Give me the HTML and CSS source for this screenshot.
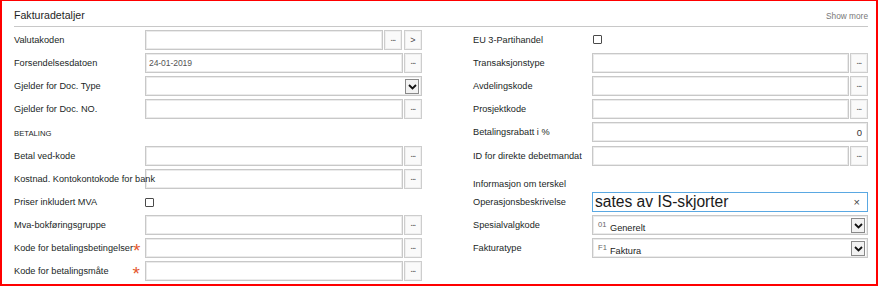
FILE: index.html
```html
<!DOCTYPE html>
<html lang="nb">
<head>
    <meta charset="UTF-8">
    <title>Fakturadetaljer</title>
    <link rel="stylesheet" href="styles.css">
</head>
<body>
    <div class="panel">
        <div class="panel-head">
            <span class="panel-title">Fakturadetaljer</span>
            <a class="show-more" href="javascript:;">Show more</a>
        </div>

        <div class="panel-body">
            <!-- venstre kolonne -->
            <div class="col col-left">
                <div class="row">
                    <label class="lbl">Valutakoden</label>
                    <div class="fld">
                        <input class="inp" type="text">
                        <span class="btn btn-dots">...</span>
                        <span class="btn btn-go">&gt;</span>
                    </div>
                </div>
                <div class="row">
                    <label class="lbl">Forsendelsesdatoen</label>
                    <div class="fld">
                        <input class="inp inp-date" type="text" value="24-01-2019">
                        <span class="btn btn-dots">...</span>
                    </div>
                </div>
                <div class="row">
                    <label class="lbl">Gjelder for Doc. Type</label>
                    <div class="fld">
                        <div class="sel">
                            <span class="sel-text"></span>
                            <span class="sel-arrow"><svg width="9" height="6" viewBox="0 0 9 6"><path d="M1 1 L4.5 4.5 L8 1" fill="none" stroke="#111" stroke-width="1.8"/></svg></span>
                        </div>
                    </div>
                </div>
                <div class="row">
                    <label class="lbl">Gjelder for Doc. NO.</label>
                    <div class="fld">
                        <input class="inp" type="text">
                        <span class="btn btn-dots">...</span>
                    </div>
                </div>
                <div class="row row-tall">
                    <span class="lbl lbl-section">BETALING</span>
                </div>
                <div class="row">
                    <label class="lbl">Betal ved-kode</label>
                    <div class="fld">
                        <input class="inp" type="text">
                        <span class="btn btn-dots">...</span>
                    </div>
                </div>
                <div class="row">
                    <label class="lbl">Kostnad. Kontokontokode for bank</label>
                    <div class="fld">
                        <input class="inp" type="text">
                        <span class="btn btn-dots">...</span>
                    </div>
                </div>
                <div class="row">
                    <label class="lbl lbl-check">Priser inkludert MVA</label>
                    <div class="fld">
                        <span class="check"></span>
                    </div>
                </div>
                <div class="row">
                    <label class="lbl">Mva-bokføringsgruppe</label>
                    <div class="fld">
                        <input class="inp" type="text">
                        <span class="btn btn-dots">...</span>
                    </div>
                </div>
                <div class="row">
                    <label class="lbl">Kode for betalingsbetingelser<span class="req">*</span></label>
                    <div class="fld">
                        <input class="inp" type="text">
                        <span class="btn btn-dots">...</span>
                    </div>
                </div>
                <div class="row">
                    <label class="lbl">Kode for betalingsmåte<span class="req">*</span></label>
                    <div class="fld">
                        <input class="inp" type="text">
                        <span class="btn btn-dots">...</span>
                    </div>
                </div>
            </div>

            <!-- høyre kolonne -->
            <div class="col col-right">
                <div class="row">
                    <label class="lbl">EU 3-Partihandel</label>
                    <div class="fld">
                        <span class="check check-eu"></span>
                    </div>
                </div>
                <div class="row">
                    <label class="lbl">Transaksjonstype</label>
                    <div class="fld">
                        <input class="inp" type="text">
                        <span class="btn btn-dots">...</span>
                    </div>
                </div>
                <div class="row">
                    <label class="lbl">Avdelingskode</label>
                    <div class="fld">
                        <input class="inp" type="text">
                        <span class="btn btn-dots">...</span>
                    </div>
                </div>
                <div class="row">
                    <label class="lbl">Prosjektkode</label>
                    <div class="fld">
                        <input class="inp" type="text">
                        <span class="btn btn-dots">...</span>
                    </div>
                </div>
                <div class="row row-tall">
                    <label class="lbl">Betalingsrabatt i %</label>
                    <div class="fld">
                        <input class="inp inp-num" type="text" value="0">
                    </div>
                </div>
                <div class="row">
                    <label class="lbl">ID for direkte debetmandat</label>
                    <div class="fld">
                        <input class="inp" type="text">
                        <span class="btn btn-dots">...</span>
                    </div>
                </div>
                <div class="row">
                    <span class="lbl lbl-info">Informasjon om terskel</span>
                </div>
                <div class="row">
                    <label class="lbl">Operasjonsbeskrivelse</label>
                    <div class="fld">
                        <div class="inp inp-focus">
                            <span class="big-text">sates av IS-skjorter</span>
                            <span class="clear">×</span>
                        </div>
                    </div>
                </div>
                <div class="row">
                    <label class="lbl">Spesialvalgkode</label>
                    <div class="fld">
                        <div class="sel">
                            <span class="sel-code">01</span>
                            <span class="sel-text">Generelt</span>
                            <span class="sel-arrow"><svg width="9" height="6" viewBox="0 0 9 6"><path d="M1 1 L4.5 4.5 L8 1" fill="none" stroke="#111" stroke-width="1.8"/></svg></span>
                        </div>
                    </div>
                </div>
                <div class="row">
                    <label class="lbl">Fakturatype</label>
                    <div class="fld">
                        <div class="sel">
                            <span class="sel-code">F1</span>
                            <span class="sel-text">Faktura</span>
                            <span class="sel-arrow"><svg width="9" height="6" viewBox="0 0 9 6"><path d="M1 1 L4.5 4.5 L8 1" fill="none" stroke="#111" stroke-width="1.8"/></svg></span>
                        </div>
                    </div>
                </div>
            </div>
        </div>
    </div>
</body>
</html>
```

FILE: styles.css
```css
*{
    margin: 0;
    padding: 0;
    box-sizing: border-box;
}
body{
    background: #ffffff;
    font-family: "Liberation Sans", Arial, sans-serif;
    color: #222222;
}

/* ramme rundt hele panelet */
.panel{
    width: 878px;
    height: 286px;
    border: 2px solid #ff0000;
    border-top-width: 1px;
    padding: 0 8px 0 12px;
    background: #ffffff;
}

.panel-head{
    height: 26px;
    display: flex;
    justify-content: space-between;
    align-items: baseline;
    padding-top: 8px;
    border-bottom: 1px solid #c8c8c8;
}
.panel-title{
    font-size: 10.6px;
    line-height: 13px;
    color: #1e1e1e;
}
.show-more{
    font-size: 8.3px;
    color: #777777;
    text-decoration: none;
}

.panel-body{
    display: grid;
    grid-template-columns: 408px 395px;
    column-gap: 51px;
    margin-top: 3px;
}

.col{
    display: flex;
    flex-direction: column;
    gap: 3px;
}

.row{
    display: flex;
    height: 20px;
}
.row-tall{
    height: 21px;
}

.lbl{
    flex: none;
    display: flex;
    justify-content: space-between;
    align-items: flex-start;
    padding-top: 4px;
    font-size: 9.2px;
    line-height: 12px;
    white-space: nowrap;
    color: #1b1f26;
    position: relative;
    z-index: 1;
}
.col-left .lbl{
    width: 131px;
    padding-right: 5px;
}
.col-right .lbl{
    width: 119px;
}
.lbl-section{
    font-size: 7.7px;
    padding-top: 6px;
}
.lbl-check{
    padding-top: 4px;
}
.lbl-info{
    padding-top: 9px;
}

.req{
    color: #e4572e;
    font-size: 19px;
    line-height: 12px;
    margin-top: 3px;
}

.fld{
    flex: 1;
    display: flex;
    gap: 1px;
    min-width: 0;
}

.inp{
    flex: 1;
    min-width: 0;
    height: 20px;
    border: 1px solid #c8c8c8;
    box-shadow: inset 0 0 0 1px #ebebeb;
    background: #ffffff;
    outline: none;
    font-family: "Liberation Sans", Arial, sans-serif;
    font-size: 9.2px;
    padding: 0 3px;
    color: #333333;
}
.inp-date{
    color: #555555;
    font-size: 8.6px;
    letter-spacing: -0.1px;
}
.inp-num{
    text-align: right;
    padding-right: 5px;
    font-size: 9.5px;
}
.inp-focus{
    display: flex;
    align-items: center;
    justify-content: space-between;
    border-color: #5aa8e2;
    box-shadow: none;
    padding: 0 7px 0 2px;
}
.big-text{
    font-size: 15.6px;
    color: #1a1a1a;
    line-height: 18px;
}
.clear{
    font-size: 11px;
    color: #444444;
}

.btn{
    flex: none;
    width: 18px;
    height: 20px;
    border: 1px solid #cdcdcd;
    box-shadow: inset 0 0 0 1px #efefef;
    background: #fafafa;
    display: flex;
    justify-content: center;
    color: #555555;
}
.btn-dots{
    font-size: 8px;
    line-height: 14px;
    padding-top: 1px;
    letter-spacing: -0.6px;
    font-weight: bold;
    color: #6a6a6a;
}
.btn-go{
    margin-left: 1px;
    font-size: 9px;
    line-height: 18px;
    color: #444444;
}

.sel{
    flex: 1;
    height: 20px;
    display: flex;
    align-items: flex-start;
    border: 1px solid #c8c8c8;
    box-shadow: inset 0 0 0 1px #ebebeb;
    padding: 0 2px 0 5px;
}
.sel-code{
    font-size: 7.6px;
    color: #666666;
    padding-top: 4px;
    width: 12px;
}
.sel-text{
    flex: 1;
    font-size: 9.2px;
    padding-top: 6px;
    line-height: 12px;
}
.sel-arrow{
    width: 14px;
    height: 15px;
    margin-top: 2px;
    border: 1px solid #8a8a8a;
    background: #f2f2f2;
    display: flex;
    align-items: center;
    justify-content: center;
}

.check{
    width: 9px;
    height: 9px;
    border: 1px solid #4a4a4a;
    border-radius: 1px;
    margin-top: 6px;
}
.check-eu{
    margin-top: 5px;
    margin-left: 1px;
}
```
